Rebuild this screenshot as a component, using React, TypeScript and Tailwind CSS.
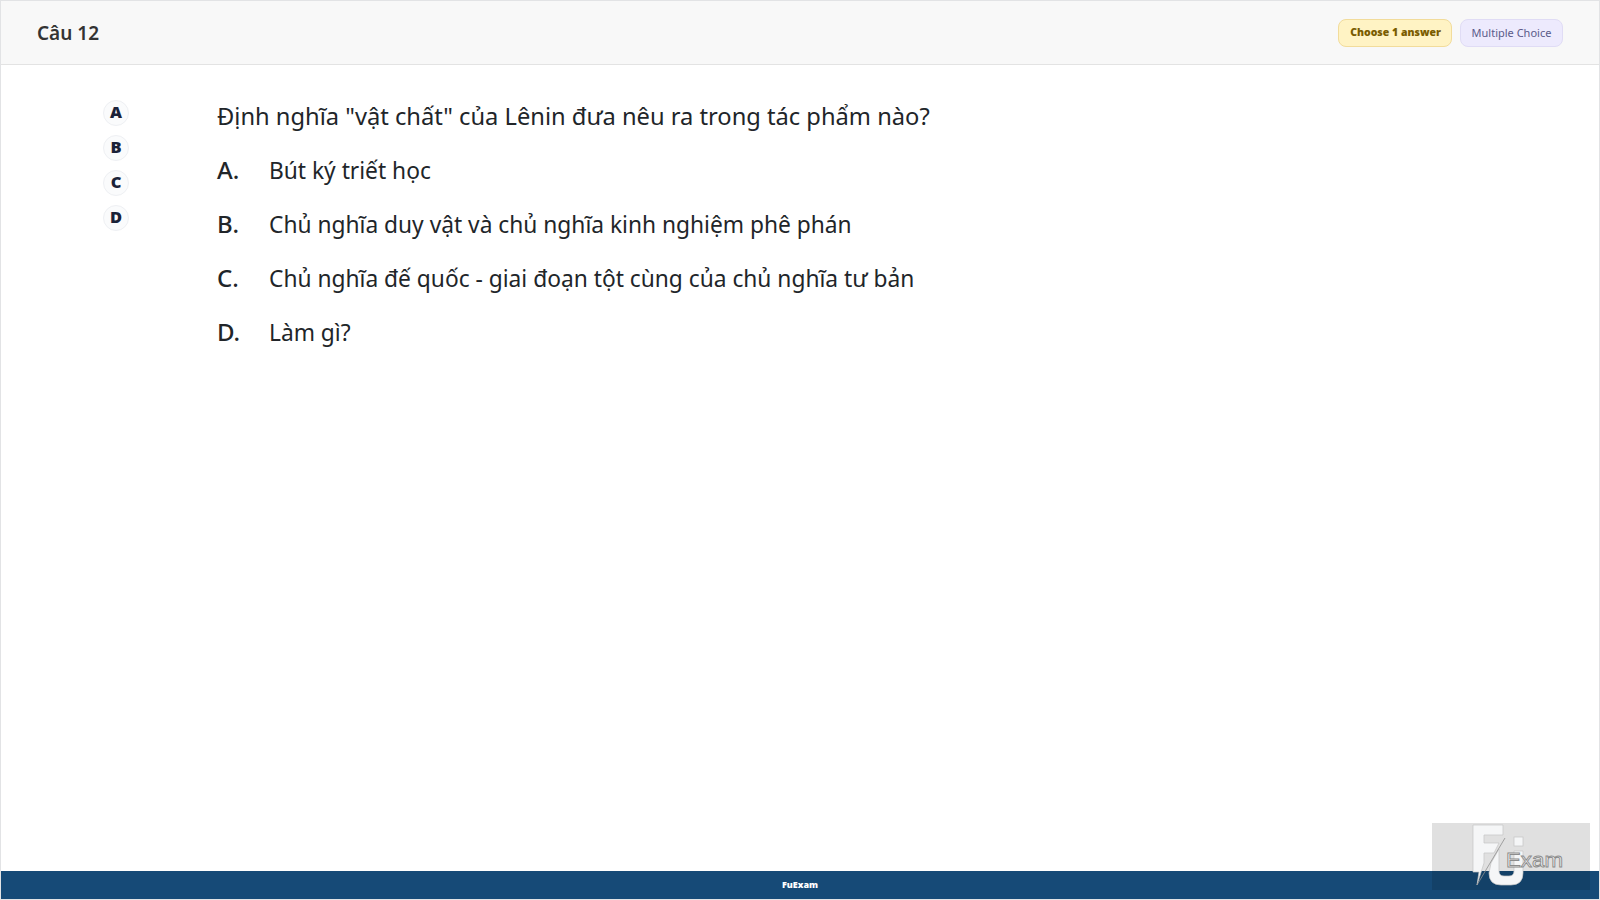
const options = [
  { key: "A", text: "Bút ký triết học" },
  { key: "B", text: "Chủ nghĩa duy vật và chủ nghĩa kinh nghiệm phê phán" },
  { key: "C", text: "Chủ nghĩa đế quốc - giai đoạn tột cùng của chủ nghĩa tư bản" },
  { key: "D", text: "Làm gì?" },
];

function Logo() {
  return (
    <svg viewBox="0 0 158 67" className="h-full w-full">
      <g fill="#f5f6f7" stroke="#c4c4c4" strokeWidth="0.7">
        <path d="M41 2 H71 V12 H52 V20 H67 L62 30 H52 V40 L45 62 L47 49 H41 Z" />
        <path d="M59 40 L67 26 V48 Q67 53 72 53 H77 Q82 53 82 48 V28 H91 V50 Q91 62 79 62 H69 Q57 62 57 50 Z" />
        <rect x="82" y="14" width="9" height="9" />
      </g>
      <path d="M73 15 L45 62" stroke="#8f8f8f" strokeWidth="0.8" fill="none" />
      <text
        x="74"
        y="43.5"
        textLength="57"
        lengthAdjust="spacingAndGlyphs"
        fontFamily="'Liberation Sans', sans-serif"
        fontSize="21"
        fill="#f4f4f4"
        stroke="#8c8c8c"
        strokeWidth="0.9"
      >
        Exam
      </text>
    </svg>
  );
}

export default function App() {
  return (
    <div className="relative flex h-[900px] flex-col overflow-hidden border border-[#e2e3e5] bg-white font-['Noto_Sans',sans-serif] text-[#212529]">
      <header className="flex h-[64px] shrink-0 items-center justify-between border-b border-[#e3e3e3] bg-[#f8f8f8] px-[36px]">
        <h1 className="pt-[2px] text-[19px] font-semibold text-[#333]">Câu 12</h1>
        <div className="flex items-center gap-2">
          <span className="flex h-[28px] w-[114px] items-center justify-center rounded-lg border border-[#f2dc9b] bg-[#fff3c4] pl-[1px] pt-[1px] text-[10.5px] font-black text-[#7a5c00]">
            Choose 1 answer
          </span>
          <span className="flex h-[28px] w-[103px] items-center justify-center rounded-lg border border-[#e0dcf5] bg-[#edeafd] pt-[1px] text-[11px] text-[#5b5a8a]">
            Multiple Choice
          </span>
        </div>
      </header>

      <main className="flex flex-1 pl-[102px] pt-[35px]">
        <div className="flex w-[114px] shrink-0 flex-col gap-[9px]">
          {options.map((o) => (
            <div
              key={o.key}
              className="flex h-[26px] w-[26px] items-center justify-center rounded-full border border-[#eef0f3] bg-[#fafbfc] pb-[1px] text-[16.5px] font-black text-[#1a2238]"
            >
              {o.key}
            </div>
          ))}
        </div>
        <div className="-mt-[2px] flex flex-col text-[22.75px] leading-[36px]">
          <p className="mb-[18px] text-[23.7px]">Định nghĩa "vật chất" của Lênin đưa nêu ra trong tác phẩm nào?</p>
          {options.map((o) => (
            <div key={o.key} className="mb-[18px] flex h-[36px]">
              <span className="w-[52px] text-[24px] font-medium">{o.key}.</span>
              <span className="pt-[1px]">{o.text}</span>
            </div>
          ))}
        </div>
      </main>

      <footer className="flex h-[28px] shrink-0 items-center justify-center bg-[#164a77] text-[9px] font-black text-white">
        FuExam
      </footer>

      <div className="absolute bottom-[9px] right-[9px] h-[67px] w-[158px] bg-black/12">
        <Logo />
      </div>
    </div>
  );
}
